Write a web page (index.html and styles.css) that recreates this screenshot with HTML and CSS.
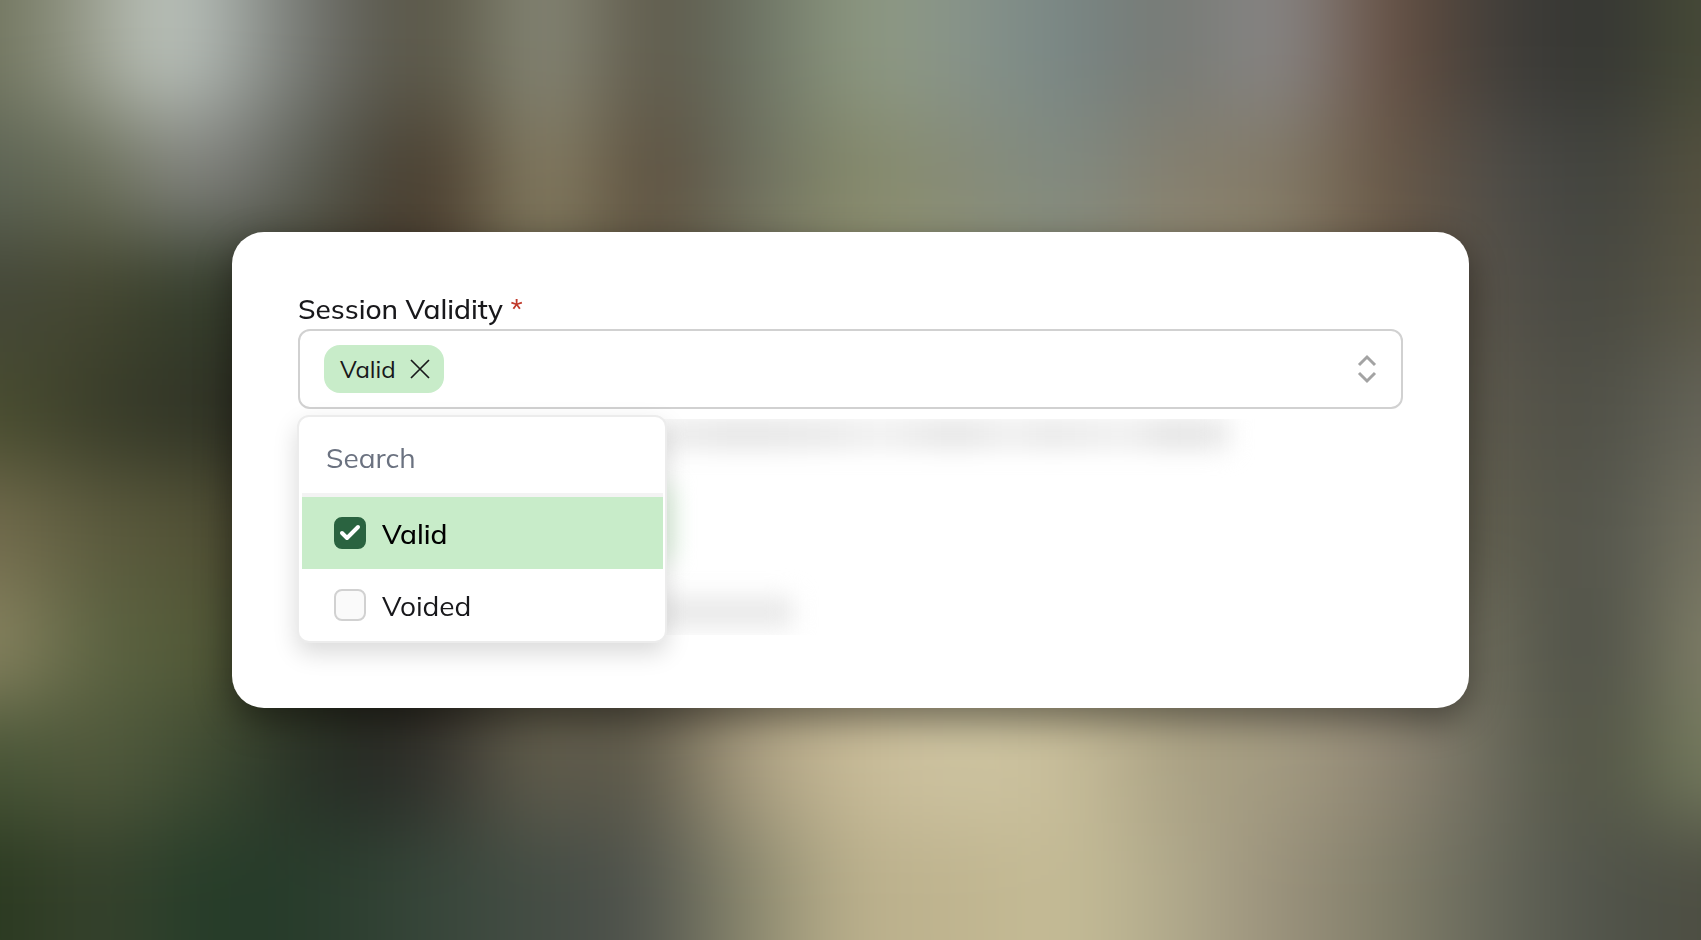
FILE: index.html
```html
<!DOCTYPE html>
<html lang="en">

<head>
  <meta charset="utf-8">
  <meta name="viewport" content="width=device-width, initial-scale=1">
  <title>Session Validity</title>
  <link rel="stylesheet" href="styles.css">
</head>

<body>
  <div class="backdrop" aria-hidden="true">
    <div class="band band1"></div>
    <div class="band band2"></div>
    <div class="band band3"></div>
    <div class="band band4"></div>
    <div class="band band5"></div>
    <div class="band band6"></div>
    <div class="band band7"></div>
    <div class="band band8"></div>
  </div>

  <main class="card">
    <label class="fieldLabel" for="validity_toggle">Session Validity <span class="required">*</span></label>
    <div class="field">
      <div class="select">
        <span class="tag">Valid
          <button class="tagRemove" type="button" aria-label="Remove Valid">
            <svg width="20" height="20" viewBox="0 0 20 20" fill="none" stroke="currentColor" stroke-width="1.7">
              <path d="M1 1L19 19M19 1L1 19" />
            </svg>
          </button>
        </span>
        <button class="toggle" id="validity_toggle" type="button" aria-expanded="true">
          <svg width="20" height="32" viewBox="0 0 20 32" fill="none" stroke="currentColor" stroke-width="3">
            <path d="M2 12L10 4L18 12M2 20L10 28L18 20" />
          </svg>
        </button>
      </div>

      <div class="menu">
        <input class="search" type="text" placeholder="Search" aria-label="Search">
        <div class="options">
          <label class="option selected">
            <span class="check">
              <input type="checkbox" checked>
              <svg width="32" height="32" viewBox="0 0 32 32" fill="none" stroke="#fff" stroke-width="4"
                stroke-linecap="round" stroke-linejoin="round">
                <path d="M8 16L13 21L24 10" />
              </svg>
            </span>
            Valid
          </label>
          <label class="option">
            <span class="check"><input type="checkbox"></span>
            Voided
          </label>
        </div>
      </div>
    </div>

    <div class="hidden" aria-hidden="true">
      <div class="smudge smudgeLong"></div>
      <div class="smudge smudgeGreen"></div>
      <div class="smudge smudgeShort"></div>
    </div>
  </main>
</body>

</html>
```
FILE: styles.css
```css
* {
  box-sizing: border-box;
}

body {
  margin: 0;
  min-height: 100vh;
  display: flex;
  align-items: center;
  padding: 0 232px;
  background-color: #5a5849;
  color: #18181b;
  font-family: Mulish, Lato, sans-serif;
  font-size: 28px;
  overflow: hidden;
}

button {
  border: none;
  background: none;
  padding: 0;
  cursor: pointer;
  display: flex;
}

/* out of focus photo */
.backdrop {
  position: fixed;
  inset: -100px;
  display: grid;
  grid-template-rows: 217px repeat(6, 1fr) 217px;
  filter: blur(42px);
}

.band1 {
  background: linear-gradient(90deg, #6f735c 5%, #a1a597 11%, #c6cec8 14%, #a3aaa5 17%, #686964, #54503f, #8e907f, #5b5546, #6b7264, #8f9a81, #87938a, #788685, #767872, #8b8a8b, #684f40, #413f3b, #333431, #484c38 95%);
}

.band2 {
  background: linear-gradient(90deg, #5c6354 5%, #6b6f58 11%, #84867f 14%, #7d7e7b 17%, #53564a, #443628, #8f886c, #584a39, #6d7061, #868a6a, #878c78, #808a82, #857e6d, #837b68, #685645, #504e49, #3f413d, #575340 95%);
}

.band3 {
  background: linear-gradient(90deg, #444739 5%, #454730, #303b2b, #44402f, #433428, #7f795c, #605541, #78755f, #959574, #929478, #8c8e79, #958c71, #8f846c, #6c5b47, #54514a, #464740, #5b5846 95%);
}

.band4 {
  background: linear-gradient(90deg, #4a4e30 5%, #393c29, #2f3325, #2b2a20, #2b2a20, #4a4536, #4a4536, #6a644e, #7b765c, #7b765c, #7b765c, #7b765c, #7b765c, #6a6450, #5a574c, #4d4e45, #67665a 95%);
}

.band5 {
  background: linear-gradient(90deg, #746d4e 5%, #5a5a3d, #535236, #3a3826, #3a3527, #504b3a, #5a5340, #8a8066, #a0967a, #a0967a, #a0967a, #968c74, #8a816c, #756f5d, #5f5d4d, #50524a, #767462 95%);
}

.band6 {
  background: linear-gradient(90deg, #8b8662 5%, #596140, #555c39, #30321f, #2b241c, #6a654d, #5f5645, #a89c80, #c6ba97, #c6bd9a, #bdb391, #ada487, #a49a82, #968d79, #676757, #4a4c44, #83826a 95%);
}

.band7 {
  background: linear-gradient(90deg, #475436 5%, #525a3d, #3e4b32, #252e25, #2b2a27, #656150, #565345, #a99d80, #c8bb97, #cec4a2, #c9bf9b, #aaa184, #a39b81, #918775, #6c6b5d, #4e5142, #787e60 95%);
}

.band8 {
  background: linear-gradient(90deg, #2a3920 5%, #38432e, #243c28, #293c2c, #364539, #444d44, #4d504b, #87856c, #bcb18d, #bfb48f, #c6bd97, #b1aa8c, #9a917c, #83806b, #66675a, #50534a, #4d4e42 95%);
}

.card {
  position: relative;
  flex: 1;
  padding: 56px 66px 73px;
  background-color: #fff;
  border-radius: 32px;
  box-shadow: 0 12px 36px rgba(0, 0, 0, 0.45);
}

.fieldLabel {
  display: block;
  line-height: 41px;
  font-weight: 500;
}

.required {
  color: #c0392b;
}

.field {
  position: relative;
}

.select {
  display: flex;
  align-items: center;
  justify-content: space-between;
  height: 80px;
  padding: 0 24px;
  border: 2px solid #d1d1d1;
  border-radius: 12px;
}

.tag {
  display: flex;
  align-items: center;
  gap: 14px;
  height: 48px;
  padding: 0 14px 0 16px;
  border-radius: 16px;
  background-color: #c8ecc9;
  font-size: 24px;
}

.tagRemove {
  color: #18181b;
}

.toggle {
  color: #a3a3a3;
}

.menu {
  position: absolute;
  z-index: 1;
  top: 86px;
  left: -1px;
  width: 370px;
  border: 2px solid #ececec;
  border-radius: 12px;
  background-color: #fff;
  box-shadow: 0 10px 24px rgba(0, 0, 0, 0.15);
  overflow: hidden;
}

.search {
  display: block;
  width: 100%;
  height: 76px;
  padding: 4px 27px 0;
  border: none;
  outline: none;
  background: none;
  font: inherit;
}

.search::placeholder {
  color: #6b7280;
  opacity: 1;
}

.options {
  margin: 0 2px 0 3px;
  border-top: 4px solid #f3f3f3;
}

.option {
  display: flex;
  align-items: center;
  gap: 16px;
  height: 72px;
  padding: 0 32px;
  cursor: pointer;
}

.selected {
  background-color: #c8ecc9;
  color: #000;
  font-weight: 500;
}

.check {
  display: grid;
}

.check input,
.check svg {
  grid-area: 1 / 1;
}

.check input {
  appearance: none;
  width: 32px;
  height: 32px;
  margin: 0;
  border: 2px solid #d1d1d1;
  border-radius: 8px;
  background-color: #fafafa;
}

.check input:checked {
  border-color: #2a6340;
  background-color: #2a6340;
}

.check svg {
  position: relative;
  pointer-events: none;
}

/* text below the menu, blurred out */
.hidden {
  display: flex;
  flex-direction: column;
  justify-content: space-between;
  height: 216px;
  margin: 10px 96px 0 361px;
  overflow: hidden;
}

.smudge {
  background-color: #e8e8e8;
  filter: blur(12px);
}

.smudgeLong {
  width: 88%;
  height: 30px;
  background-image: linear-gradient(90deg, #ededed, #e4e4e4 14%, #e8e8e8 28%, #f0f0f0 39%, #e4e4e4 52%, #efefef 62%, #e8e8e8 68%, #efefef 82%, #e2e2e2 90%, #e8e8e8);
}

.smudgeGreen {
  width: 12px;
  height: 72px;
  background-color: #c8ecc9;
}

.smudgeShort {
  width: 134px;
  height: 30px;
  margin-bottom: 8px;
}
```
